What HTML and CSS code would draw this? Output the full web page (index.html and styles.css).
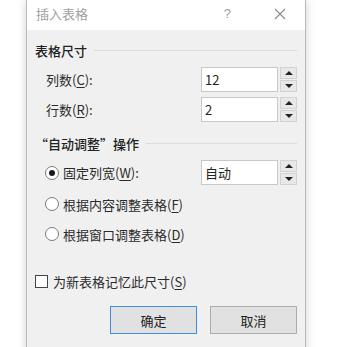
FILE: index.html
```html
<!DOCTYPE html>
<html>
<head>
<meta charset="utf-8">
<link rel="stylesheet" href="styles.css">
</head>
<body>
<div class="dialog">
  <div class="titlebar">
    <span class="title">插入表格</span>
    <span class="help">?</span>
    <span class="close">
      <svg width="12" height="12" viewBox="0 0 12 12"><path d="M1 1L11 11M11 1L1 11" stroke="#8a8a8a" stroke-width="1.1" fill="none"/></svg>
    </span>
  </div>
  <div class="body">
    <div class="group-head"><span>表格尺寸</span><i class="rule"></i></div>
    <div class="field-row">
      <span class="label">列数(<u>C</u>):</span>
      <div class="spin"><div class="box">12</div><div class="arrows"><b class="up"></b><b class="down"></b></div></div>
    </div>
    <div class="field-row">
      <span class="label">行数(<u>R</u>):</span>
      <div class="spin"><div class="box">2</div><div class="arrows"><b class="up"></b><b class="down"></b></div></div>
    </div>
    <div class="group-head second"><span>“自动调整”操作</span><i class="rule"></i></div>
    <div class="field-row radio-row">
      <span class="label"><i class="radio on"></i>固定列宽(<u>W</u>):</span>
      <div class="spin"><div class="box">自动</div><div class="arrows"><b class="up"></b><b class="down"></b></div></div>
    </div>
    <div class="option first"><i class="radio"></i>根据内容调整表格(<u>F</u>)</div>
    <div class="option"><i class="radio"></i>根据窗口调整表格(<u>D</u>)</div>
    <div class="check-row"><i class="check"></i>为新表格记忆此尺寸(<u>S</u>)</div>
    <div class="buttons">
      <button class="btn primary">确定</button>
      <button class="btn">取消</button>
    </div>
  </div>
</div>
</body>
</html>
```

FILE: styles.css
```css
html, body {
  margin: 0;
  padding: 0;
  background: #ffffff;
  overflow: hidden;
}
body {
  font-family: "Noto Sans CJK SC", "Noto Sans", sans-serif;
  font-size: 13px;
  color: #2b2b2b;
}
.dialog {
  margin-left: 26px;
  width: 278px;
  height: 380px;
  border-left: 1px solid #b9b9b9;
  border-right: 1px solid #b9b9b9;
  box-shadow: 0 0 9px rgba(0, 0, 0, 0.18);
  display: flex;
  flex-direction: column;
}
.titlebar {
  height: 30px;
  box-sizing: border-box;
  padding-bottom: 3px;
  background: #ffffff;
  display: flex;
  align-items: center;
  padding-left: 9px;
}
.title {
  color: #a0a0a0;
  flex: 1;
}
.help {
  color: #a0a0a0;
  font-family: "Liberation Sans", sans-serif;
  font-size: 13px;
  margin-right: 43px;
}
.close {
  width: 12px;
  height: 12px;
  margin-right: 19px;
  display: flex;
}
.body {
  flex: 1;
  background: #f0f0f0;
  padding: 12px 8px 0 8px;
}
.group-head {
  display: flex;
  align-items: center;
  height: 18px;
  line-height: 18px;
}
.group-head span {
  font-weight: 500;
  color: #222;
}
.group-head.second {
  margin-top: 13px;
}
.rule {
  flex: 1;
  height: 1px;
  background: #dcdcdc;
  margin-left: 7px;
  margin-top: -2px;
}
.field-row {
  display: flex;
  align-items: center;
  justify-content: space-between;
  margin-top: 5px;
  padding-left: 11px;
}
.group-head + .field-row {
  margin-top: 7px;
}
.label {
  display: flex;
  align-items: center;
}
u {
  text-decoration: underline;
  text-underline-offset: 2px;
}
.spin {
  display: flex;
  gap: 2px;
}
.box {
  width: 72px;
  height: 23px;
  border: 1px solid #c8c8c8;
  background: #ffffff;
  line-height: 23px;
  padding-left: 3px;
  font-size: 13px;
  color: #222;
}
.arrows {
  display: flex;
  flex-direction: column;
  gap: 1px;
  width: 17px;
}
.arrows b {
  flex: 1;
  box-sizing: border-box;
  border: 1px solid #d2d2d2;
  background: #e8e8e8;
  position: relative;
}
.arrows b::after {
  content: "";
  position: absolute;
  left: 50%;
  top: 50%;
  margin-left: -4px;
  border-left: 4px solid transparent;
  border-right: 4px solid transparent;
}
.arrows .up::after {
  margin-top: -2px;
  border-bottom: 4px solid #222;
}
.arrows .down::after {
  margin-top: -2px;
  border-top: 4px solid #222;
}
.radio-row {
  margin-top: 8px;
}
.radio {
  display: inline-block;
  box-sizing: border-box;
  width: 14px;
  height: 14px;
  border: 1px solid #7a7a7a;
  border-radius: 50%;
  background: #ffffff;
  margin-right: 4px;
  margin-left: -1px;
  position: relative;
}
.radio.on::after {
  content: "";
  position: absolute;
  left: 3px;
  top: 3px;
  width: 6px;
  height: 6px;
  border-radius: 50%;
  background: #1a1a1a;
}
.option {
  display: flex;
  align-items: center;
  padding-left: 11px;
  margin-top: 12px;
  height: 18px;
}
.option.first {
  margin-top: 10px;
}
.check-row {
  display: flex;
  align-items: center;
  margin-top: 29px;
  height: 18px;
}
.check {
  display: inline-block;
  box-sizing: border-box;
  width: 13px;
  height: 13px;
  border: 1px solid #444;
  background: #fff;
  margin-right: 5px;
}
.buttons {
  display: flex;
  justify-content: flex-end;
  gap: 13px;
  margin-top: 16px;
}
.btn {
  width: 87px;
  height: 28px;
  box-sizing: border-box;
  border: 1px solid #adadad;
  background: #e1e1e1;
  font-family: inherit;
  font-size: 13px;
  color: #222;
  padding: 0;
}
.btn.primary {
  border: 1px solid #3c8fdc;
  box-shadow: inset 0 0 0 1px #e1e1e1;
}
```
